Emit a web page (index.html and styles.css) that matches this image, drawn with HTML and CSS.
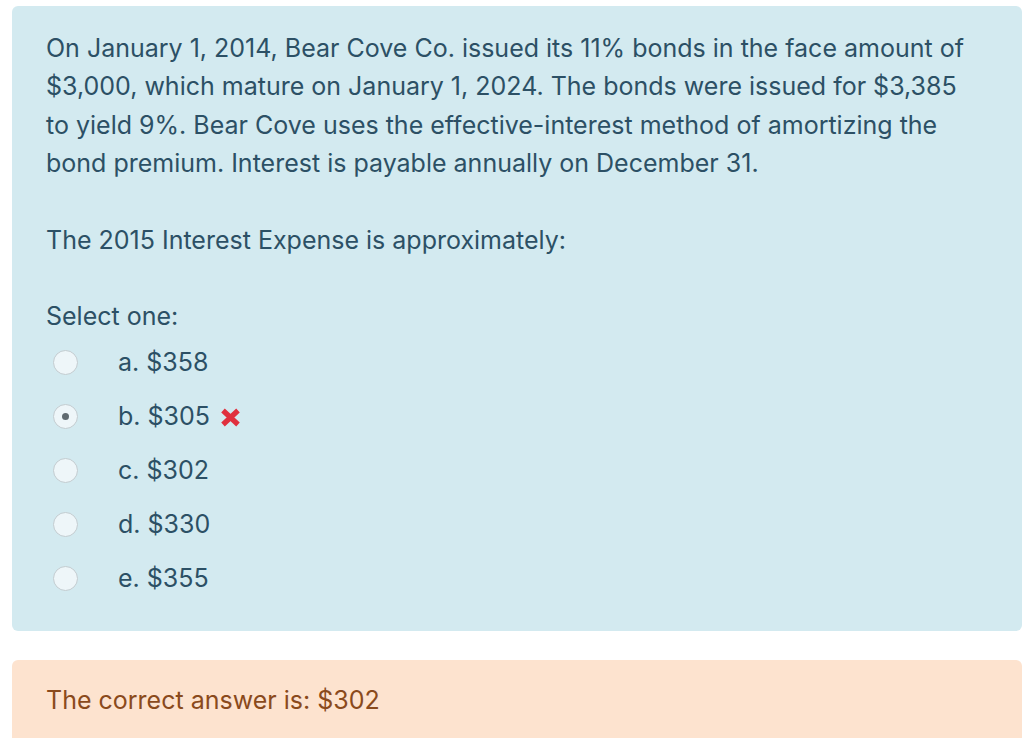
FILE: index.html
```html
<!DOCTYPE html>
<html>
<head>
<meta charset="utf-8">
<link rel="stylesheet" href="styles.css">
</head>
<body>
<div class="page">
  <div class="que">
    <p class="qtext">On January 1, 2014, Bear Cove Co. issued its 11% bonds in the face amount of<br>$3,000, which mature on January 1, 2024. The bonds were issued for $3,385<br>to yield 9%. Bear Cove uses the effective-interest method of amortizing the<br>bond premium. Interest is payable annually on December 31.</p>
    <p class="qtext prompt">The 2015 Interest Expense is approximately:</p>
    <p class="select">Select one:</p>
    <div class="answers">
      <div class="opt"><span class="radio"></span><span class="label">a. $358</span></div>
      <div class="opt"><span class="radio checked"></span><span class="label">b. $305</span><svg class="wrong" width="21" height="19" viewBox="0 0 21 19"><path d="M3 2.5 L18 16.5 M18 2.5 L3 16.5" stroke="#e0303e" stroke-width="5.2" stroke-linecap="butt"/></svg></div>
      <div class="opt"><span class="radio"></span><span class="label">c. $302</span></div>
      <div class="opt"><span class="radio"></span><span class="label">d. $330</span></div>
      <div class="opt"><span class="radio"></span><span class="label">e. $355</span></div>
    </div>
  </div>
  <div class="feedback">The correct answer is: $302</div>
</div>
</body>
</html>
```
FILE: styles.css
```css
html, body {
  margin: 0;
  padding: 0;
  background: #ffffff;
}
body {
  font-family: Inter, "Liberation Sans", Arial, sans-serif;
  font-size: 25px;
  line-height: 38.4px;
}
.page {
  padding: 6px 2px 0 12px;
  display: flex;
  flex-direction: column;
  gap: 29px;
}
.que {
  background: #d3eaf0;
  border-radius: 6px;
  padding: 23px 20px 26px 34px;
  color: #2c5065;
}
.qtext {
  margin: 0 0 38px 0;
  white-space: nowrap;
}
.select {
  margin: 0;
}
.answers {
  display: flex;
  flex-direction: column;
}
.opt {
  height: 54px;
  display: flex;
  align-items: center;
}
.radio {
  width: 23px;
  height: 23px;
  border-radius: 50%;
  border: 1px solid #c3ccd0;
  background: #eef6f9;
  margin-left: 7px;
  margin-right: 40px;
  display: flex;
  align-items: center;
  justify-content: center;
  box-sizing: content-box;
}
.radio.checked::after {
  content: "";
  width: 7px;
  height: 7px;
  border-radius: 50%;
  background: #5f6a70;
}
.wrong {
  margin-left: 10px;
  margin-top: 2px;
}
.feedback {
  background: #fde3cf;
  border-radius: 6px;
  padding: 21px 34px 40px 34px;
  color: #8a4a1c;
}
```
